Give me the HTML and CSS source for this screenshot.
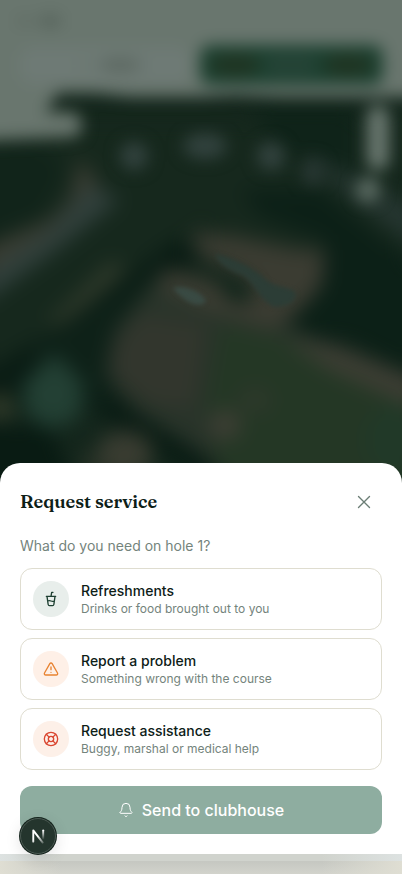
FILE: index.html
```html
<!DOCTYPE html>
<html lang="en">
<head>
    <meta charset="UTF-8">
    <meta name="viewport" content="width=device-width, initial-scale=1.0">
    <title>Request service</title>
    <link rel="stylesheet" href="styles.css">
</head>
<body>

    <!-- Blurred course map behind the sheet -->
    <div class="course" aria-hidden="true">
        <svg viewBox="0 0 402 483" preserveAspectRatio="xMidYMin slice">
            <defs>
                <filter id="soft" x="-20%" y="-20%" width="140%" height="140%" color-interpolation-filters="sRGB">
                    <feGaussianBlur stdDeviation="10"/>
                </filter>
                <filter id="edge" x="-20%" y="-20%" width="140%" height="140%" color-interpolation-filters="sRGB">
                    <feGaussianBlur stdDeviation="8"/>
                </filter>
                <filter id="fine" x="-20%" y="-20%" width="140%" height="140%" color-interpolation-filters="sRGB">
                    <feGaussianBlur stdDeviation="2"/>
                </filter>
            </defs>
            <rect width="402" height="483" fill="#14261c"/>

            <!-- Fairways, rough and trees -->
            <g filter="url(#soft)">
                <path d="M-20 120H402V360L340 335 275 310 250 250 200 225 130 290 100 330 60 360 -20 390Z" fill="#16281d"/>
                <path d="M240 190H320L420 270V375L350 342 270 328 290 310 320 290 325 240 260 215Z" fill="#0c2017"/>
                <path d="M250 105H355V175L335 165 280 150Z" fill="#0f2319"/>
                <path d="M-20 150L40 145 65 170 40 215 -20 240Z" fill="#11241a"/>
                <path d="M80 158L102 190 60 240 -20 285V250L50 220 70 200Z" fill="#3b3d33"/>
                <path d="M90 185L120 200 50 255 -20 305V275L50 230Z" fill="#303f3b"/>
                <path d="M45 325L110 262 128 268 65 325Z" fill="#303a2b"/>
                <path d="M-20 375L60 325 175 240 200 250 165 290 110 335 90 375 140 415 230 475 200 480 70 395 -20 420Z" fill="#0a1c14"/>
                <path d="M30 345L165 265 190 300 100 410 40 380Z" fill="#0e2118"/>
                <path d="M160 275L200 285 270 315 340 350 420 395V490H235L200 450 135 410 105 375 115 330Z" fill="#29342a"/>
                <path d="M220 325L290 340 420 405V490H225L205 410Z" fill="#243725"/>
                <path d="M110 350L140 315 205 325 195 405 155 405 120 385Z" fill="#32362d"/>
                <path d="M285 340L335 345 420 380V410L330 370Z" fill="#3d3e34"/>
                <path d="M190 232L230 235 300 250 325 250 322 285 300 310 275 330 205 310 160 290 165 268 210 280 240 300 258 290 240 275 200 255Z" fill="#3b3c32"/>
                <path d="M215 278L245 283 252 302 232 303Z" fill="#10251a"/>
                <path d="M80 450L180 485H80Z" fill="#242f24"/>
                <path d="M-30 425H50L80 500H-30Z" fill="#091b13"/>
                <path d="M22 385L55 354 84 385 80 416 50 430 25 412Z" fill="#234034"/>
                <ellipse cx="125" cy="453" rx="28" ry="22" fill="#393c31"/>
                <ellipse cx="225" cy="425" rx="16" ry="15" fill="#3d3e34"/>
                <ellipse cx="255" cy="400" rx="16" ry="12" fill="#2e382b"/>
                <ellipse cx="0" cy="407" rx="14" ry="14" fill="#323b2a"/>
                <ellipse cx="395" cy="440" rx="30" ry="35" fill="#213928"/>
                <path d="M305 155L330 180 420 250V210L350 175Z" fill="#263631"/>
            </g>

            <!-- Bunkers -->
            <g filter="url(#fine)">
                <path d="M215 254C230 257 253 267 266 280C280 289 292 287 296 293C297 301 288 307 274 307C260 300 256 286 244 276C232 271 219 266 215 254Z" fill="#2c3d36"/>
                <path d="M173 288C184 284 202 292 206 301C201 309 185 304 173 288Z" fill="#394a43"/>
            </g>

            <!-- Hole markers -->
            <g filter="url(#edge)" fill="#32423e">
                <circle cx="134" cy="156" r="14"/>
                <ellipse cx="205" cy="146" rx="22" ry="13"/>
                <circle cx="271" cy="156" r="14"/>
                <ellipse cx="313" cy="172" rx="11" ry="14" fill="#283733"/>
            </g>

            <!-- Header, mode switch and map controls -->
            <g filter="url(#edge)">
                <path d="M-30 -30H432V97H280L235 95 200 97H130L95 93H58L46 112H70Q82 114 82 125T72 137L-30 141Z" fill="#69766e"/>
                <rect x="20" y="47" width="170" height="37" rx="12" fill="#6e7a75"/>
                <rect x="200" y="45" width="183" height="40" rx="10" fill="#1c4030"/>
                <rect x="367" y="106" width="22" height="64" rx="10" fill="#6a7870"/>
                <circle cx="368" cy="190" r="12" fill="#5c6c63"/>
                <ellipse cx="50" cy="21" rx="12" ry="7" fill="#58655d"/>
                <ellipse cx="24" cy="21" rx="8" ry="6" fill="#606c64"/>
                <ellipse cx="120" cy="65" rx="22" ry="7" fill="#5c6861"/>
                <ellipse cx="85" cy="65" rx="6" ry="6" fill="#69766e"/>
                <ellipse cx="235" cy="65" rx="25" ry="10" fill="#203422"/>
                <ellipse cx="348" cy="65" rx="25" ry="10" fill="#203422"/>
                <rect x="266" y="56" width="50" height="18" rx="8" fill="#264437"/>
            </g>
        </svg>
    </div>

    <main class="sheet">
        <div class="sheet-header">
            <h2>Request service</h2>
            <button class="close-btn" type="button" aria-label="Close">
                <svg class="icon-close" viewBox="0 0 24 24"><path d="M18 6 6 18M6 6l12 12"/></svg>
            </button>
        </div>

        <p class="question">What do you need on hole 1?</p>

        <div class="options">
            <button class="option" type="button">
                <span class="option-icon green">
                    <svg viewBox="0 0 24 24"><path d="m6 8 1.75 12.28a2 2 0 0 0 2 1.72h4.54a2 2 0 0 0 2-1.72L18 8M5 8h14M7 15a6.47 6.47 0 0 1 5 0 6.47 6.47 0 0 0 5 0M12 8l1-6h2"/></svg>
                </span>
                <span class="option-text">
                    <span class="option-title">Refreshments</span>
                    <span class="option-desc">Drinks or food brought out to you</span>
                </span>
            </button>

            <button class="option" type="button">
                <span class="option-icon orange">
                    <svg viewBox="0 0 24 24"><path d="m21.73 18-8-14a2 2 0 0 0-3.48 0l-8 14A2 2 0 0 0 4 21h16a2 2 0 0 0 1.73-3M12 9v4M12 17h.01"/></svg>
                </span>
                <span class="option-text">
                    <span class="option-title">Report a problem</span>
                    <span class="option-desc">Something wrong with the course</span>
                </span>
            </button>

            <button class="option" type="button">
                <span class="option-icon red">
                    <svg viewBox="0 0 24 24"><circle cx="12" cy="12" r="10"/><circle cx="12" cy="12" r="4"/><path d="m4.93 4.93 4.24 4.24M14.83 9.17l4.24-4.24M14.83 14.83l4.24 4.24M9.17 14.83l-4.24 4.24"/></svg>
                </span>
                <span class="option-text">
                    <span class="option-title">Request assistance</span>
                    <span class="option-desc">Buggy, marshal or medical help</span>
                </span>
            </button>
        </div>

        <button class="send-btn" type="button">
            <svg viewBox="0 0 24 24"><path d="M10.27 21a2 2 0 0 0 3.46 0M3.26 15.33A1 1 0 0 0 4 17h16a1 1 0 0 0 .74-1.67C19.41 13.96 18 12.5 18 8A6 6 0 0 0 6 8c0 4.5-1.41 5.96-2.74 7.33"/></svg>
            Send to clubhouse
        </button>
    </main>

    <div class="page-bottom"></div>

    <!-- Dev tools badge -->
    <button class="dev-badge" type="button" aria-label="Open dev tools">
        <svg viewBox="0 0 36 36" fill="none" stroke-width="2">
            <defs>
                <linearGradient id="stem" x1="0" y1="12" x2="0" y2="22" gradientUnits="userSpaceOnUse">
                    <stop offset="0" stop-color="#fff"/>
                    <stop offset="1" stop-color="#fff" stop-opacity="0"/>
                </linearGradient>
                <linearGradient id="slash" x1="18" y1="18" x2="24" y2="26" gradientUnits="userSpaceOnUse">
                    <stop offset="0" stop-color="#fff"/>
                    <stop offset="1" stop-color="#fff" stop-opacity="0.2"/>
                </linearGradient>
            </defs>
            <path d="M13 24V12L23 25" stroke="url(#slash)"/>
            <path d="M23.5 12v9" stroke="url(#stem)"/>
        </svg>
    </button>

</body>
</html>
```
FILE: styles.css
```css
* {
    box-sizing: border-box;
}

body {
    font-family: Inter, "Liberation Sans", sans-serif;
    margin: 0;
    min-height: 100vh;
    display: flex;
    flex-direction: column;
    background-color: #14261c;
    color: #0d2017;
}

button {
    font-family: inherit;
    cursor: pointer;
}

/* Map background */
.course {
    flex: 1;
    min-height: 120px;
    height: 0;
    margin-bottom: -20px;
    overflow: hidden;
}

.course svg {
    display: block;
    width: 100%;
    height: 100%;
}

/* Bottom sheet */
.sheet {
    position: relative;
    padding: 20px;
    background-color: #fff;
    border-radius: 20px 20px 0 0;
}

.sheet-header {
    display: flex;
    align-items: center;
    justify-content: space-between;
    height: 38px;
}

h2 {
    margin: 0;
    font-family: Fraunces, "Liberation Serif", serif;
    font-size: 18px;
    line-height: 28px;
    font-weight: 600;
}

.close-btn {
    display: flex;
    align-items: center;
    justify-content: center;
    width: 36px;
    height: 36px;
    padding: 0;
    background: none;
    border: none;
    border-radius: 50%;
    color: #6b7d75;
}

.icon-close {
    width: 22px;
    height: 22px;
}

svg {
    stroke-linecap: round;
    stroke-linejoin: round;
}

.sheet button svg {
    fill: none;
    stroke: currentColor;
    stroke-width: 2;
}

.sheet .close-btn svg,
.sheet .send-btn svg {
    stroke-width: 1.5;
}

.question {
    margin: 14px 0 12px;
    font-size: 14px;
    line-height: 21px;
    color: #74847c;
}

.options {
    display: flex;
    flex-direction: column;
    gap: 8px;
}

.option {
    display: flex;
    align-items: center;
    gap: 12px;
    padding: 12px;
    background-color: #fff;
    border: 1px solid #dfddd0;
    border-radius: 12px;
    text-align: left;
}

.option-icon {
    display: flex;
    align-items: center;
    justify-content: center;
    width: 36px;
    height: 36px;
    border-radius: 50%;
}

.option-icon svg {
    width: 16px;
    height: 16px;
}

.green {
    background-color: #e8eeeb;
    color: #1d3f31;
}

.orange {
    background-color: #fef0e7;
    color: #e88331;
}

.red {
    background-color: #fdf0e8;
    color: #da4630;
}

.option-text {
    display: flex;
    flex-direction: column;
}

.option-title {
    font-size: 14px;
    line-height: 20px;
    font-weight: 500;
    color: #0d2017;
}

.option-desc {
    font-size: 12px;
    line-height: 16px;
    color: #74847c;
}

.send-btn {
    display: flex;
    align-items: center;
    justify-content: center;
    gap: 8px;
    width: 100%;
    height: 48px;
    margin-top: 16px;
    background-color: #8eada0;
    border: none;
    border-radius: 12px;
    color: #fff;
    font-size: 16px;
    font-weight: 500;
}

.send-btn svg {
    width: 16px;
    height: 16px;
}

/* Strip of the page left under the sheet */
.page-bottom {
    height: 20px;
    background: linear-gradient(90deg, #dde2e1, #d0d3cd 15%, #d0d3cd 80%, #dde2e1) top / 100% 7px no-repeat,
        linear-gradient(90deg, #dfded3, rgba(223, 222, 211, 0) 15%, rgba(223, 222, 211, 0) 80%, #dfded3),
        linear-gradient(#c6c8c2 40%, #d2d3cc);
}

.dev-badge {
    position: fixed;
    left: 20px;
    bottom: 20px;
    width: 36px;
    height: 36px;
    padding: 0;
    background-color: #24352d;
    border: 1px solid #4b5a53;
    border-radius: 50%;
    box-shadow: 0 0 0 1px #14231c, 0 4px 16px rgba(0, 0, 0, 0.12);
}

.dev-badge svg {
    display: block;
    width: 100%;
    height: 100%;
}
```
